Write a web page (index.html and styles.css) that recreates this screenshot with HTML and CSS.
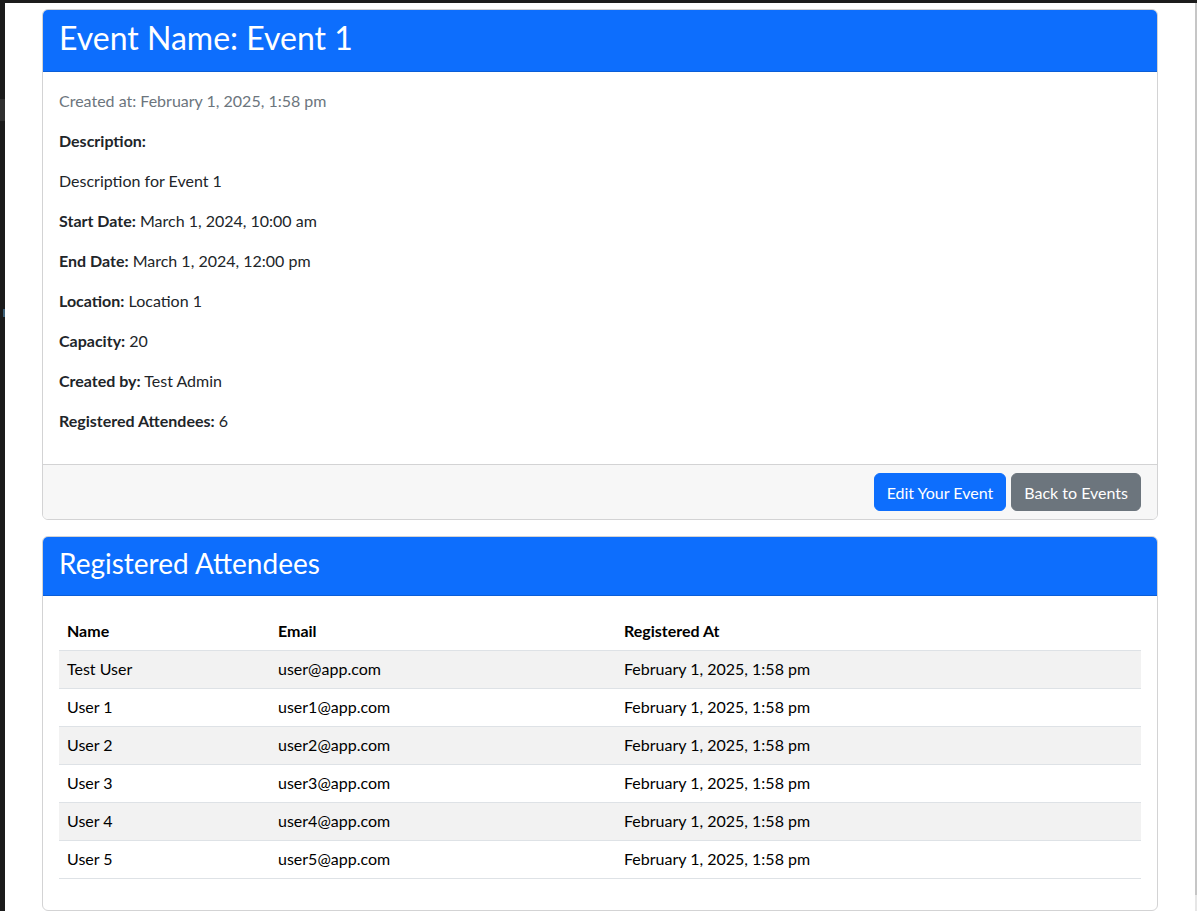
FILE: index.html
```html
<!DOCTYPE html>
<html lang="en">
<head>
<meta charset="utf-8">
<title>Event 1</title>
<link rel="stylesheet" href="styles.css">
</head>
<body>
<div class="topbar"></div>
<div class="frame">
  <div class="leftstrip">
    <div class="ls-a"></div>
    <div class="ls-b"></div>
    <div class="ls-c"></div>
  </div>
  <main class="content">
    <div class="container">
      <section class="card">
        <div class="card-header">
          <h2 class="title">Event Name: Event 1</h2>
        </div>
        <div class="card-body">
          <p class="muted">Created at: February 1, 2025, 1:58 pm</p>
          <p><strong>Description:</strong></p>
          <p>Description for Event 1</p>
          <p><strong>Start Date:</strong> March 1, 2024, 10:00 am</p>
          <p><strong>End Date:</strong> March 1, 2024, 12:00 pm</p>
          <p><strong>Location:</strong> Location 1</p>
          <p><strong>Capacity:</strong> 20</p>
          <p><strong>Created by:</strong> Test Admin</p>
          <p><strong>Registered Attendees:</strong> 6</p>
        </div>
        <div class="card-footer">
          <a class="btn btn-primary" href="#">Edit Your Event</a>
          <a class="btn btn-secondary" href="#">Back to Events</a>
        </div>
      </section>

      <section class="card card-2">
        <div class="card-header">
          <h3 class="title-sm">Registered Attendees</h3>
        </div>
        <div class="card-body">
          <table class="table">
            <thead>
              <tr><th class="c-name">Name</th><th class="c-email">Email</th><th>Registered At</th></tr>
            </thead>
            <tbody>
              <tr><td>Test User</td><td>user@app.com</td><td>February 1, 2025, 1:58 pm</td></tr>
              <tr><td>User 1</td><td>user1@app.com</td><td>February 1, 2025, 1:58 pm</td></tr>
              <tr><td>User 2</td><td>user2@app.com</td><td>February 1, 2025, 1:58 pm</td></tr>
              <tr><td>User 3</td><td>user3@app.com</td><td>February 1, 2025, 1:58 pm</td></tr>
              <tr><td>User 4</td><td>user4@app.com</td><td>February 1, 2025, 1:58 pm</td></tr>
              <tr><td>User 5</td><td>user5@app.com</td><td>February 1, 2025, 1:58 pm</td></tr>
            </tbody>
          </table>
        </div>
      </section>
    </div>
  </main>
  <div class="scrollbar"><div class="thumb"></div></div>
</div>
</body>
</html>
```
FILE: styles.css
```css
* { box-sizing: border-box; }
html, body { margin: 0; padding: 0; background: #fff; }
body {
  font-family: Lato, "Open Sans", "Noto Sans", sans-serif;
  font-size: 16px;
  line-height: 1.5;
  color: #212529;
  height: 911px;
  overflow: hidden;
  display: flex;
  flex-direction: column;
}
.topbar { height: 3px; background: #1c1c1c; flex: none; }
.frame { flex: 1; display: flex; min-height: 0; }
.leftstrip {
  width: 5px; flex: none; background: #1b1b1b;
  display: flex; flex-direction: column;
}
.ls-a { height: 96px; }
.ls-b { height: 22px; background: #2f2f2f; }
.ls-c { height: 196px; border-bottom: 8px solid #3d6077; margin-left: 3px; }
.content { flex: 1; min-width: 0; }
.scrollbar { width: 2px; flex: none; background: #e6e6e6; }
.thumb { height: 892px; background: #c6c6c6; }

.container { width: 1116px; margin: 0 auto; padding-top: 6px; }

.card {
  border: 1px solid #d3d3d4;
  border-radius: 6px;
  background: #fff;
  overflow: hidden;
}
.card-2 { margin-top: 16px; }
.card-header {
  background: #0d6efd;
  color: #fff;
  padding: 8px 16px;
  border-bottom: 1px solid #0b5ed7;
}
.title {
  margin: 0 0 8px;
  font-size: 32px;
  font-weight: 400;
  line-height: 37px;
  padding-top: 1px;
  height: 37px;
}
.title-sm {
  margin: 0 0 8px;
  font-size: 28px;
  font-weight: 400;
  line-height: 34px;
  padding-top: 1px;
  height: 34px;
}
.card-body { padding: 17px 16px 15px; }
.card-body p { margin: 0 0 16px; }
.card-body strong { font-weight: 700; color: #212529; }
.muted { color: #6c757d; }

.card-footer {
  background: #f7f7f7;
  border-top: 1px solid #d3d3d4;
  padding: 8px 16px;
  display: flex;
  justify-content: flex-end;
  gap: 5px;
}
.btn {
  display: inline-block;
  padding: 7px 12px 5px;
  border: 1px solid transparent;
  border-radius: 6px;
  font-size: 16px;
  line-height: 24px;
  color: #fff;
  text-decoration: none;
}
.btn-primary { background: #0d6efd; border-color: #0d6efd; }
.btn-secondary { background: #6c757d; border-color: #6c757d; }

.table {
  width: 100%;
  border-collapse: collapse;
  color: #000;
  margin-bottom: 16px;
}
.table th, .table td {
  text-align: left;
  padding: 6px 8px 7px;
  border-bottom: 1px solid #dee2e6;
  line-height: 24px;
}
.table th { font-weight: 700; }
.c-name { width: 211px; }
.c-email { width: 346px; }
.table tbody tr:nth-child(odd) td { background: #f2f2f2; }
```
